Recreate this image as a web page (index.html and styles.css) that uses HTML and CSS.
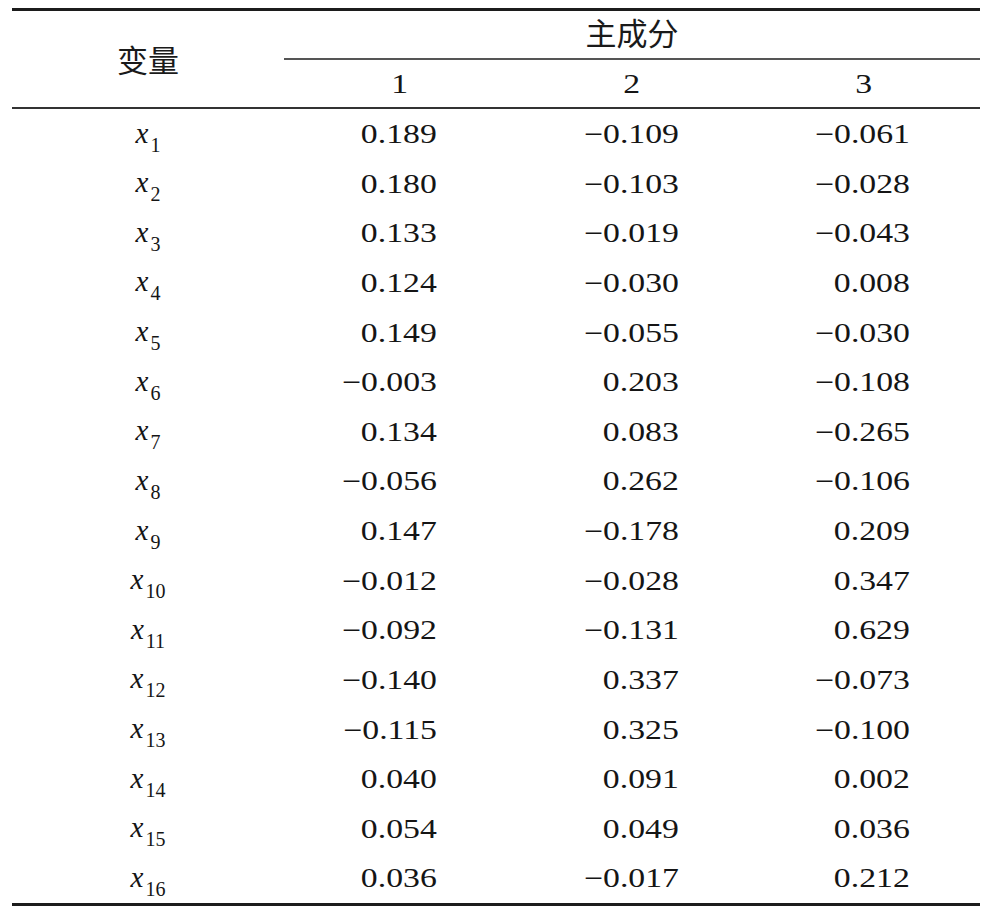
FILE: index.html
```html
<!DOCTYPE html>
<html lang="zh">
<head>
<meta charset="utf-8">
<title>主成分得分系数</title>
<link rel="stylesheet" href="styles.css">
</head>
<body>
<table class="pc-table">
  <colgroup>
    <col class="c0"><col class="c1"><col class="c2"><col class="c3">
  </colgroup>
  <thead>
    <tr class="h1">
      <th class="var cjk" rowspan="2">变量</th>
      <th class="group cjk" colspan="3">主成分</th>
    </tr>
    <tr class="h2">
      <th class="num-head"><span class="n">1</span></th>
      <th class="num-head"><span class="n">2</span></th>
      <th class="num-head"><span class="n">3</span></th>
    </tr>
  </thead>
  <tbody>
    <tr class="r"><td class="lab"><i>x</i><sub>1</sub></td><td class="v1"><span class="n">0.189</span></td><td class="v2"><span class="n">−0.109</span></td><td class="v3"><span class="n">−0.061</span></td></tr>
    <tr class="r"><td class="lab"><i>x</i><sub>2</sub></td><td class="v1"><span class="n">0.180</span></td><td class="v2"><span class="n">−0.103</span></td><td class="v3"><span class="n">−0.028</span></td></tr>
    <tr class="r"><td class="lab"><i>x</i><sub>3</sub></td><td class="v1"><span class="n">0.133</span></td><td class="v2"><span class="n">−0.019</span></td><td class="v3"><span class="n">−0.043</span></td></tr>
    <tr class="r"><td class="lab"><i>x</i><sub>4</sub></td><td class="v1"><span class="n">0.124</span></td><td class="v2"><span class="n">−0.030</span></td><td class="v3"><span class="n">0.008</span></td></tr>
    <tr class="r"><td class="lab"><i>x</i><sub>5</sub></td><td class="v1"><span class="n">0.149</span></td><td class="v2"><span class="n">−0.055</span></td><td class="v3"><span class="n">−0.030</span></td></tr>
    <tr class="r"><td class="lab"><i>x</i><sub>6</sub></td><td class="v1"><span class="n">−0.003</span></td><td class="v2"><span class="n">0.203</span></td><td class="v3"><span class="n">−0.108</span></td></tr>
    <tr class="r"><td class="lab"><i>x</i><sub>7</sub></td><td class="v1"><span class="n">0.134</span></td><td class="v2"><span class="n">0.083</span></td><td class="v3"><span class="n">−0.265</span></td></tr>
    <tr class="r"><td class="lab"><i>x</i><sub>8</sub></td><td class="v1"><span class="n">−0.056</span></td><td class="v2"><span class="n">0.262</span></td><td class="v3"><span class="n">−0.106</span></td></tr>
    <tr class="r"><td class="lab"><i>x</i><sub>9</sub></td><td class="v1"><span class="n">0.147</span></td><td class="v2"><span class="n">−0.178</span></td><td class="v3"><span class="n">0.209</span></td></tr>
    <tr class="r"><td class="lab"><i>x</i><sub>10</sub></td><td class="v1"><span class="n">−0.012</span></td><td class="v2"><span class="n">−0.028</span></td><td class="v3"><span class="n">0.347</span></td></tr>
    <tr class="r"><td class="lab"><i>x</i><sub>11</sub></td><td class="v1"><span class="n">−0.092</span></td><td class="v2"><span class="n">−0.131</span></td><td class="v3"><span class="n">0.629</span></td></tr>
    <tr class="r"><td class="lab"><i>x</i><sub>12</sub></td><td class="v1"><span class="n">−0.140</span></td><td class="v2"><span class="n">0.337</span></td><td class="v3"><span class="n">−0.073</span></td></tr>
    <tr class="r"><td class="lab"><i>x</i><sub>13</sub></td><td class="v1"><span class="n">−0.115</span></td><td class="v2"><span class="n">0.325</span></td><td class="v3"><span class="n">−0.100</span></td></tr>
    <tr class="r"><td class="lab"><i>x</i><sub>14</sub></td><td class="v1"><span class="n">0.040</span></td><td class="v2"><span class="n">0.091</span></td><td class="v3"><span class="n">0.002</span></td></tr>
    <tr class="r"><td class="lab"><i>x</i><sub>15</sub></td><td class="v1"><span class="n">0.054</span></td><td class="v2"><span class="n">0.049</span></td><td class="v3"><span class="n">0.036</span></td></tr>
    <tr class="r"><td class="lab"><i>x</i><sub>16</sub></td><td class="v1"><span class="n">0.036</span></td><td class="v2"><span class="n">−0.017</span></td><td class="v3"><span class="n">0.212</span></td></tr>
  </tbody>
</table>
</body>
</html>
```

FILE: styles.css
```css
html, body {
  margin: 0;
  padding: 0;
  background: #ffffff;
}

body {
  font-family: "Liberation Serif", "Times New Roman", serif;
  color: #151515;
}

.pc-table {
  margin: 8px 0 0 12px;
  width: 968px;
  table-layout: fixed;
  border-collapse: separate;
  border-spacing: 0;
  border-top: 3px solid #1c1c1c;
  border-bottom: 3px solid #1c1c1c;
}

.c0 { width: 272px; }
.c1 { width: 232px; }
.c2 { width: 232px; }
.c3 { width: 232px; }

th {
  font-weight: normal;
  padding: 0;
}

.cjk {
  font-family: "Noto Sans CJK SC", "Noto Sans CJK JP", sans-serif;
  font-size: 31px;
  color: #1a1a1a;
}

.var {
  text-align: center;
  vertical-align: middle;
  line-height: 40px;
  border-bottom: 2px solid #333333;
}

.group {
  text-align: center;
  vertical-align: top;
  line-height: 40px;
  padding: 1px 0 6px 0;
  border-bottom: 2px solid #555555;
}

.num-head {
  text-align: center;
  vertical-align: top;
  font-size: 27px;
  line-height: 30px;
  padding: 9px 0 8px 0;
  border-bottom: 2px solid #333333;
}

.num-head .n {
  transform-origin: 50% 50%;
}

.n {
  display: inline-block;
  transform: scaleX(1.25);
  transform-origin: 100% 50%;
}

tr.r { height: 49.625px; }

td {
  padding: 10px 0 0 0;
  vertical-align: top;
  font-size: 27px;
  line-height: 30px;
  white-space: nowrap;
}

td.lab {
  text-align: center;
  font-size: 29px;
  line-height: 29px;
  padding-top: 9.5px;
}

td.lab i {
  font-style: italic;
}

td.lab sub {
  font-size: 20px;
  line-height: 0;
  vertical-align: -9px;
  margin-left: 2px;
}

td.v1 { text-align: right; padding-right: 79px; }
td.v2 { text-align: right; padding-right: 69px; }
td.v3 { text-align: right; padding-right: 70px; }
```
